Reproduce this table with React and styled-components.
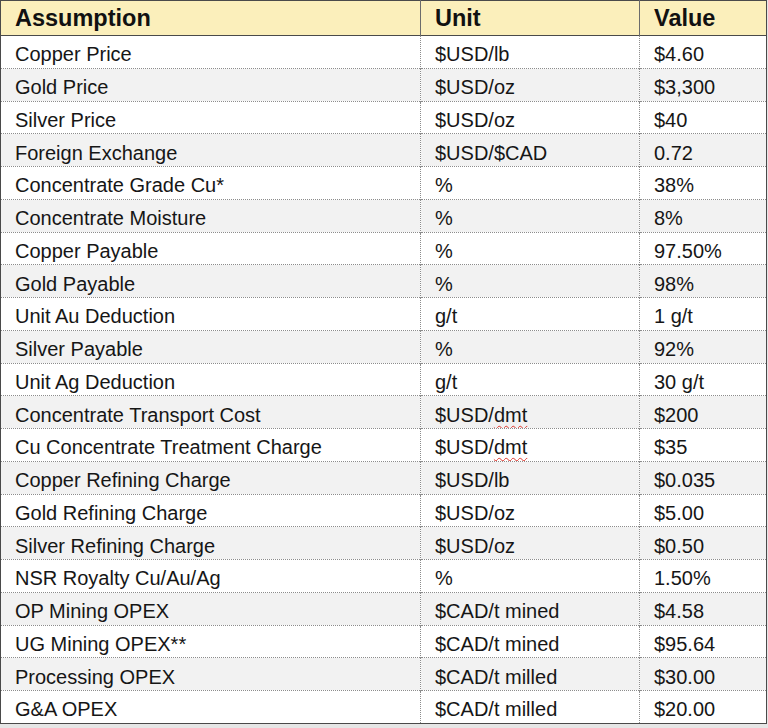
import styled, { createGlobalStyle } from "styled-components";

const GlobalStyle = createGlobalStyle`
  html, body {
    margin: 0;
    padding: 0;
    background: #ffffff;
  }
  body {
    font-family: "Liberation Sans", Arial, sans-serif;
    color: #161616;
  }
`;

const Page = styled.div`
  width: 768px;
  height: 728px;
  background: #e6e6e6;
  overflow: hidden;
`;

const Table = styled.table`
  width: 766px;
  border-collapse: collapse;
  table-layout: fixed;
  background: #fff;
  border: 1px solid #4a4a4a;
`;

const HeadRow = styled.tr`
  height: 35px;
  background: #fbefbb;
  border-bottom: 1px solid #4a4a4a;
`;

const HeadCell = styled.th`
  text-align: left;
  padding: 1px 0 0 14px;
  font-size: 23.5px;
  font-weight: 700;
  color: #111;
  border-left: 1px solid #6b6b6b;
  &:first-child {
    border-left: none;
  }
`;

const Row = styled.tr`
  height: 32.76px;
  background: ${(p) => (p.$shaded ? "#f2f2f2" : "#ffffff")};
  border-top: 1px dotted #8c8c8c;
`;

const Cell = styled.td`
  padding: 5px 0 0 14px;
  font-size: 20px;
  line-height: 26px;
  white-space: nowrap;
  overflow: hidden;
  border-left: 1px dotted #8c8c8c;
  &:first-child {
    border-left: none;
  }
`;

const Typo = styled.span`
  text-decoration: underline wavy #e0352b;
  text-decoration-thickness: 1px;
  text-underline-offset: 3px;
`;

const rows = [
  ["Copper Price", "$USD/lb", "$4.60"],
  ["Gold Price", "$USD/oz", "$3,300"],
  ["Silver Price", "$USD/oz", "$40"],
  ["Foreign Exchange", "$USD/$CAD", "0.72"],
  ["Concentrate Grade Cu*", "%", "38%"],
  ["Concentrate Moisture", "%", "8%"],
  ["Copper Payable", "%", "97.50%"],
  ["Gold Payable", "%", "98%"],
  ["Unit Au Deduction", "g/t", "1 g/t"],
  ["Silver Payable", "%", "92%"],
  ["Unit Ag Deduction", "g/t", "30 g/t"],
  ["Concentrate Transport Cost", "dmt", "$200"],
  ["Cu Concentrate Treatment Charge", "dmt", "$35"],
  ["Copper Refining Charge", "$USD/lb", "$0.035"],
  ["Gold Refining Charge", "$USD/oz", "$5.00"],
  ["Silver Refining Charge", "$USD/oz", "$0.50"],
  ["NSR Royalty Cu/Au/Ag", "%", "1.50%"],
  ["OP Mining OPEX", "$CAD/t mined", "$4.58"],
  ["UG Mining OPEX**", "$CAD/t mined", "$95.64"],
  ["Processing OPEX", "$CAD/t milled", "$30.00"],
  ["G&A OPEX", "$CAD/t milled", "$20.00"],
];

const UnitText = ({ unit }) =>
  unit === "dmt" ? (
    <>
      $USD/<Typo>dmt</Typo>
    </>
  ) : (
    unit
  );

const App = () => {
  return (
    <Page>
      <GlobalStyle />
      <Table>
        <colgroup>
          <col style={{ width: 420 }} />
          <col style={{ width: 219 }} />
          <col style={{ width: 127 }} />
        </colgroup>
        <thead>
          <HeadRow>
            <HeadCell>Assumption</HeadCell>
            <HeadCell>Unit</HeadCell>
            <HeadCell>Value</HeadCell>
          </HeadRow>
        </thead>
        <tbody>
          {rows.map(([name, unit, value], i) => (
            <Row key={name} $shaded={i % 2 === 1}>
              <Cell>{name}</Cell>
              <Cell>
                <UnitText unit={unit} />
              </Cell>
              <Cell>{value}</Cell>
            </Row>
          ))}
        </tbody>
      </Table>
    </Page>
  );
};

export default App;
